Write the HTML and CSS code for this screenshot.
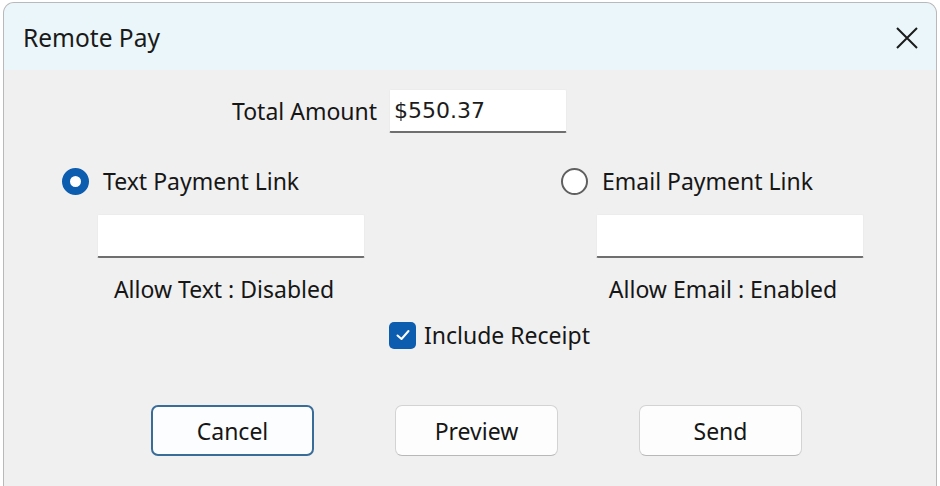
FILE: index.html
```html
<!DOCTYPE html>
<html lang="en">
<head>
    <meta charset="UTF-8">
    <meta name="viewport" content="width=device-width, initial-scale=1.0">
    <title>Remote Pay</title>
    <link rel="stylesheet" href="styles.css">
</head>
<body>
    <div class="window">
        <div class="titlebar">
            <span class="title">Remote Pay</span>
            <button class="close-btn" aria-label="Close">
                <svg width="24" height="24" viewBox="0 0 24 24">
                    <path d="M2 2 L22 22 M22 2 L2 22" stroke="#1b1b1b" stroke-width="2" fill="none"/>
                </svg>
            </button>
        </div>

        <div class="content">
            <div class="amount-row">
                <label class="amount-label" for="amount">Total Amount</label>
                <input class="field amount-field" id="amount" type="text" value="$550.37">
            </div>

            <div class="options">
                <div class="option">
                    <div class="option-head">
                        <span class="radio checked"></span>
                        <span>Text Payment Link</span>
                    </div>
                    <input class="field link-field" type="text">
                    <div class="status">Allow Text : Disabled</div>
                </div>
                <div class="option">
                    <div class="option-head">
                        <span class="radio"></span>
                        <span>Email Payment Link</span>
                    </div>
                    <input class="field link-field" type="text">
                    <div class="status">Allow Email : Enabled</div>
                </div>
            </div>

            <div class="receipt-row">
                <span class="checkbox">
                    <svg width="18" height="18" viewBox="0 0 18 18">
                        <path d="M3.5 9.5 L7.5 13 L14.5 5" stroke="#ffffff" stroke-width="2" fill="none" stroke-linecap="round" stroke-linejoin="round"/>
                    </svg>
                </span>
                <span>Include Receipt</span>
            </div>

            <div class="buttons">
                <button class="btn default">Cancel</button>
                <button class="btn">Preview</button>
                <button class="btn">Send</button>
            </div>
        </div>
    </div>
</body>
</html>
```

FILE: styles.css
```css
html, body {
    margin: 0;
    height: 100%;
    overflow: hidden;
}

body {
    background-color: #ffffff;
    font-family: "Noto Sans", "Open Sans", sans-serif;
    font-size: 23px;
    color: #161616;
}

.window {
    margin: 2px 3px 0;
    height: 500px;
    border: 1px solid #b9b9b9;
    border-bottom: none;
    border-radius: 11px 11px 0 0;
    background-color: #f0f0f0;
    overflow: hidden;
}

.titlebar {
    height: 67px;
    display: flex;
    align-items: center;
    justify-content: space-between;
    padding: 2px 11px 0 19px;
    box-sizing: border-box;
    background-color: #eaf6f9;
}

.title {
    font-size: 24.5px;
    color: #1a1a1a;
}

.close-btn {
    width: 36px;
    height: 36px;
    display: flex;
    align-items: center;
    justify-content: center;
    padding: 0;
    border: none;
    background: none;
}

.content {
    padding-top: 19px;
}

.amount-row {
    display: flex;
    align-items: center;
    gap: 12px;
    padding-left: 228px;
}

.field {
    box-sizing: border-box;
    background-color: #ffffff;
    border: 1px solid #ececec;
    border-bottom: 2px solid #6f6f6f;
    border-radius: 2px;
    outline: none;
}

.amount-field {
    width: 178px;
    height: 44px;
    padding: 0 4px;
    font-family: "DejaVu Sans", sans-serif;
    font-size: 22px;
    color: #1c1c1c;
}

.options {
    display: grid;
    grid-template-columns: 499px 1fr;
    margin-top: 34px;
    padding-left: 58px;
}

.option-head {
    display: flex;
    align-items: center;
    gap: 14px;
    height: 28px;
}

.radio {
    box-sizing: border-box;
    width: 27px;
    height: 27px;
    border-radius: 50%;
    border: 2px solid #606060;
    background-color: #ffffff;
}

.radio.checked {
    border: 8px solid #0c5cb0;
}

.link-field {
    display: block;
    width: 268px;
    height: 44px;
    margin: 19px 0 0 35px;
}

.status {
    width: 254px;
    margin: 18px 0 0 35px;
    text-align: center;
    line-height: 26px;
}

.receipt-row {
    display: flex;
    align-items: center;
    gap: 8px;
    margin-top: 17px;
    padding-left: 385px;
}

.checkbox {
    width: 27px;
    height: 27px;
    border-radius: 5px;
    background-color: #0c5cb0;
    display: flex;
    align-items: center;
    justify-content: center;
}

.buttons {
    display: flex;
    gap: 81px;
    margin-top: 54px;
    padding-left: 147px;
}

.btn {
    width: 163px;
    height: 51px;
    font-family: inherit;
    font-size: 23px;
    color: #161616;
    background-color: #fdfdfd;
    border: 1px solid #d3d3d3;
    border-bottom-color: #b8b8b8;
    border-radius: 7px;
}

.btn.default {
    border: 2px solid #3a6c98;
    background-color: #fbfdff;
}
```
